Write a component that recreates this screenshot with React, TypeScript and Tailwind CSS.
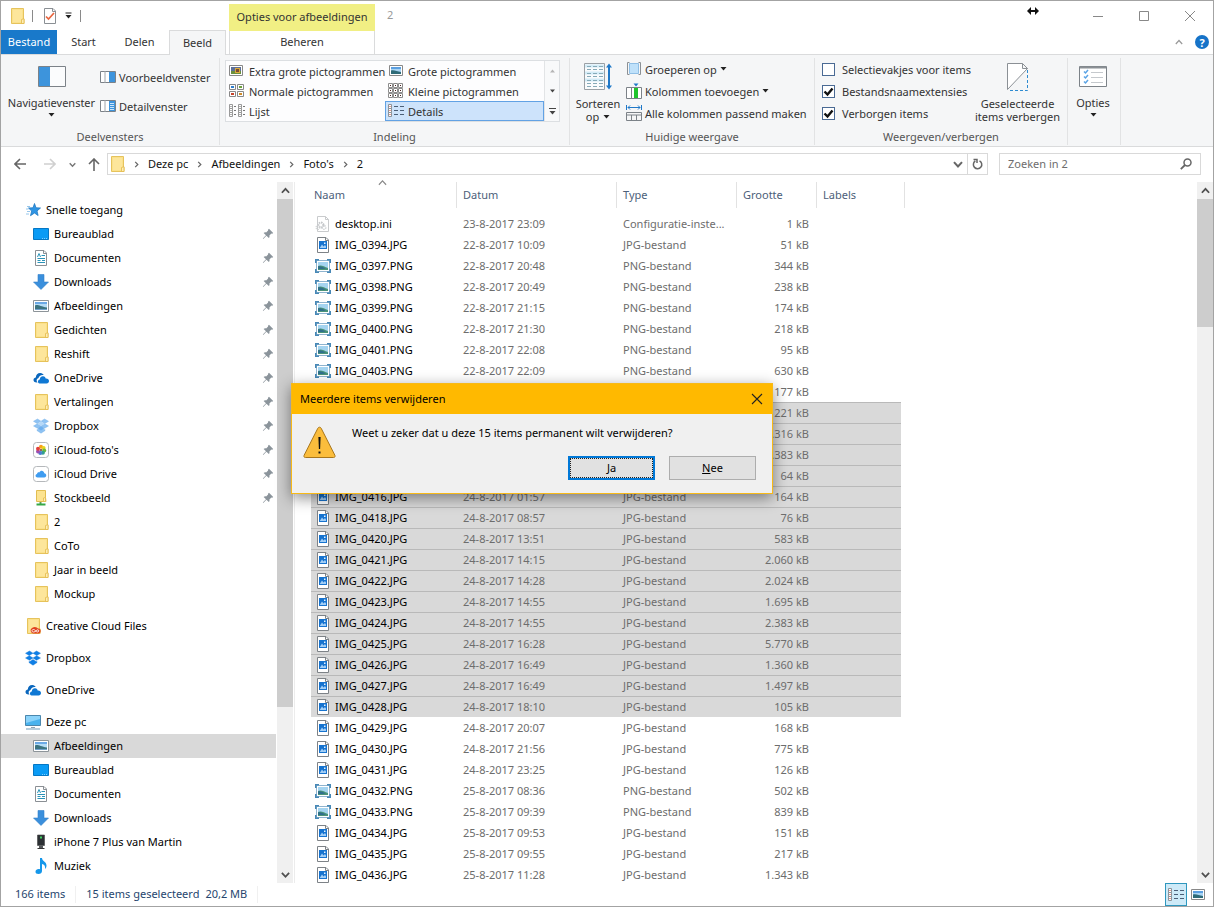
import React from "react";

type P = { children: React.ReactNode; w?: number; h?: number; vb?: string };

function Svg({ children, w = 16, h = 16, vb }: P) {
  return (
    <svg aria-hidden="true" width={w} height={h} viewBox={vb ?? `0 0 ${w} ${h}`} className="shrink-0" fill="none">
      {children}
    </svg>
  );
}

/* ---------- navigation and file icons ---------- */

function FolderShape() {
  return (
    <>
      <path d="M2.500.5h12v10.500l.5.5v4h-12.500z" fill="#fbe18b" stroke="#e6c35c" />
      <path d="M4 2h9v12H4z" fill="#fde69b" />
      <path d="M12.500 15.500v-4l2.500-.8v4.800z" fill="#fdeeb5" stroke="#e3b94a" strokeWidth=".8" />
    </>
  );
}

const Folder = () => (
  <Svg>
    <FolderShape />
  </Svg>
);

const Star = () => (
  <Svg>
    <path d="M9.500 1.500l1.500 4.300 4.500.2-3.500 2.900 1.100 4.600-3.600-2.500-4 2.700L6.700 9 3.500 6l4.500-.2z" fill="#2f95e4" stroke="#1f78c2" strokeWidth=".8" />
    <path d="M2 4.500h3M1 7h2.500M2 9.500h3M1 12h3" stroke="#7cb8e6" strokeWidth=".8" />
  </Svg>
);

const Desktop = () => (
  <Svg>
    <path d="M.5 2.500h15v11H.5z" fill="#0a9bf5" stroke="#0577c4" />
    <path d="M9 12.500h6" stroke="#7cd0ff" strokeDasharray="1 1" />
  </Svg>
);

const Doc = () => (
  <Svg>
    <path d="M2.500.5h8.500l2.500 2.500v12.500h-11z" fill="#fff" stroke="#8a8f94" />
    <path d="M10.500.5v3h3" stroke="#8a8f94" />
    <path d="M4.500 7l1.500-3.500L7.500 7M8.500 5.500H12M4.500 8.500H12M4.500 10.500h3M9 10.500h3M4.500 12.500H12" stroke="#2b93b8" />
  </Svg>
);

const Download = () => (
  <Svg>
    <path d="M5 .5h6V8h4.500L8 15.500.5 8H5z" fill="#3a8fdc" stroke="#3482cb" strokeWidth=".6" />
  </Svg>
);

const Picture = () => (
  <Svg>
    <path d="M.5 2.500h15v11H.5z" fill="#fff" stroke="#8d9499" />
    <path d="M2 4h12v8H2z" fill="#b5dcf6" />
    <path d="M2 4h12v2H2z" fill="#6ba9e6" />
    <path d="M2 7.500c3-1.500 5 1 12 2V11H2z" fill="#3c7480" />
    <path d="M2 11h12v1H2z" fill="#6f9fca" />
  </Svg>
);

const OneDrive = () => (
  <Svg>
    <path d="M4.500 12.500C1.800 12.800.3 11.500.5 9.800c.1-1.400 1.200-2 2.300-2.200C2.800 4.500 5 2.800 7.500 3c1.600.2 2.600 1 3.200 2.100-3-.5-4.700 1-5.200 3-2 .5-2.500 3-1 4.400z" fill="#0a67bd" />
    <path d="M6.500 13.500c-2-.4-2.200-3.600.3-4.100C7 6.800 9.200 5.700 11 6.500c1 .4 1.500 1.200 1.700 2 2-.2 3.300 1 3.300 2.600 0 1.500-1 2.400-2.400 2.400z" fill="#0f78d4" />
  </Svg>
);

function DropboxIcon({ pale = false }: { pale?: boolean }) {
  return (
    <Svg>
      <g fill={pale ? "#8fc3f3" : "#0f7fe6"} stroke={pale ? "#6aa9e6" : "#0d73d4"} strokeWidth=".4">
        <path d="M4.500 1L8 3.200 4.300 5.600.5 3.300z" />
        <path d="M11.500 1L8 3.200l3.700 2.400 3.800-2.300z" />
        <path d="M.5 8l3.800-2.300L8 8l-3.500 2.300z" />
        <path d="M15.500 8l-3.800-2.300L8 8l3.500 2.300z" />
        <path d="M4 11.400l.6.300L8 9.500l3.400 2.200.6-.3v1.200L8 15.200l-4-2.600z" />
      </g>
      {pale && <path d="M4.300 5.700L8 8l3.700-2.300L8 3.300z" fill="#b5d8f8" />}
      {pale && <path d="M4.600 10.300L8 8l3.400 2.300L8 12.500z" fill="#6fb0ee" />}
    </Svg>
  );
}

const ICloudPhotos = () => (
  <Svg>
    <rect x=".5" y=".5" width="15" height="15" rx="3" fill="#fff" stroke="#b5b8bb" />
    <circle cx="8" cy="4.800" r="2" fill="#f7a11a" />
    <circle cx="10.600" cy="6" r="2" fill="#e8d21c" />
    <circle cx="11.200" cy="8.500" r="2" fill="#6cb83c" />
    <circle cx="9.900" cy="10.700" r="2" fill="#35a08d" />
    <circle cx="7.300" cy="11" r="2" fill="#4a7fd0" />
    <circle cx="5" cy="9.500" r="2" fill="#9a4fb4" />
    <circle cx="5" cy="6.700" r="2" fill="#e2403c" />
    <circle cx="8" cy="8" r="1" fill="#7a3020" />
  </Svg>
);

const ICloudDrive = () => (
  <Svg>
    <rect x=".5" y=".5" width="15" height="15" rx="3" fill="#fff" stroke="#b5b8bb" />
    <path d="M4.500 11.500c-2.300 0-2.600-3-.5-3.500C4.200 6.200 5.800 6 6.300 6.500 7.500 3.800 11 4.500 11.300 7.300c2.600.2 2.700 4.200 0 4.200z" fill="#3f9cf0" />
  </Svg>
);

const NetFolder = () => (
  <Svg>
    <path d="M3.500.5h9v7l.5 4H3.500z" fill="#fce390" stroke="#e2bd50" />
    <path d="M10.500 11.500v-3.500l2-.5v4z" fill="#fff0b8" stroke="#e3b94a" strokeWidth=".8" />
    <path d="M7.500 12v2.500" stroke="#5b9e54" strokeWidth="2" />
    <path d="M3.500 14.500h9" stroke="#35a845" strokeWidth="2" />
  </Svg>
);

const CreativeCloud = () => (
  <Svg>
    <FolderShape />
    <path d="M8 15.500a3 3 0 0 1-1-5.500c2.500-2 5-1 6 .500 2.500 0 3 2 2.500 3.500-.5 1-1.500 1.500-2.500 1.500z" fill="#e0431f" />
    <path d="M8.500 14c-2 0-2-2.500 0-2.500 1.500 0 2.500 2.500 4 2.500s1.800-2 .2-2.200c-1.200 0-2 2.200-4.200 2.200z" stroke="#fff" strokeWidth=".9" />
  </Svg>
);

const Computer = () => (
  <Svg>
    <path d="M.5 1.500h15v10H.5z" fill="#49b3ee" stroke="#4b87ad" />
    <path d="M1 2h14v3L1 9z" fill="#8bd3fa" />
    <path d="M6 13.500h4" stroke="#8fa3b0" />
    <path d="M1 15h14" stroke="#6f9bb8" />
  </Svg>
);

const Phone = () => (
  <Svg>
    <path d="M4.500 1h7v10.500h-7z" fill="#2c3034" stroke="#444" strokeWidth=".6" />
    <path d="M7 2.500h2v2H7z" fill="#3fcf5f" />
    <path d="M6 11.500h4V14H6z" fill="#55585b" />
    <path d="M4.500 14.500h7" stroke="#333" />
  </Svg>
);

const Music = () => (
  <Svg>
    <path d="M7 0h2c0 3 4.500 3.500 4.500 7.500 0 1.500-.5 2.500-1.500 3.500.6-3-.8-4.600-3-5v7C9 15 7.500 16 5.500 16 3.500 16 2.500 15 2.500 13.700c0-2 2.500-3.200 4.500-2.400z" fill="#1597ea" />
  </Svg>
);

const Ini = () => (
  <Svg>
    <path d="M2.500.5h8l3 3v12h-11z" fill="#fff" stroke="#c9cbcd" />
    <path d="M10.500.5v3h3" stroke="#c9cbcd" />
    <circle cx="6" cy="9" r="2.500" stroke="#c3c6c9" strokeWidth="2" strokeDasharray="1.500 .8" />
    <circle cx="9" cy="11.500" r="1.800" stroke="#d0d3d5" strokeWidth="1.500" strokeDasharray="1.200 .8" />
    <circle cx="3" cy="11.500" r="2" stroke="#d0d3d5" strokeWidth="1.200" strokeDasharray="1.200 .8" />
  </Svg>
);

const Jpg = () => (
  <Svg>
    <path d="M2.500.5h8.500l2.500 2.500v12.500h-11z" fill="#fff" stroke="#7d8287" />
    <path d="M10.500.5v3h3" stroke="#7d8287" />
    <path d="M4 4h8v8H4z" fill="#1673cf" />
    <path d="M5 10.500l2-3 1.500 2 1.500-1.500 1 1.500v1.500H5z" fill="#a4cff6" />
    <path d="M9 5.500h1.500V7H9z" fill="#e6f3fe" />
  </Svg>
);

const Png = () => (
  <Svg>
    <path d="M1.500 2.500h13v11h-13z" fill="#fff" stroke="#8fb4cf" />
    <path d="M3 4h10v8H3z" fill="#a5d4f0" />
    <path d="M3 8c3-1.500 6 .5 10 2v2H3z" fill="#4b9478" />
    <path d="M3 8.500c2-1 5 .5 8 2l-3 .5H3z" fill="#2f6f8c" />
    <path d="M.8 5V1.800H4M12 1.800h3.200V5M.8 11v3.200H4M12 14.200h3.200V11" stroke="#4788b6" strokeWidth="1.600" />
  </Svg>
);

const Pin = () => (
  <Svg w={12} h={12}>
    <path d="M7 .8l4.200 4.200-1 .8-.8-.2-2 2c.3 1 .1 1.800-.5 2.500L4.400 7.700 1.500 10.700l-.6.200.2-.7 2.900-2.900-2.400-2.400c.8-.7 1.600-.8 2.500-.5l2-2-.1-.7z" fill="#8b949b" />
  </Svg>
);

/* ---------- small glyphs ---------- */

const Caret = () => (
  <Svg w={7} h={4}>
    <path d="M.5 0h6L3.500 3.500z" fill="#222" />
  </Svg>
);

function Chevron({ dir, size = 8, color = "#666", sw = 1.6 }: { dir: "up" | "down" | "right"; size?: number; color?: string; sw?: number }) {
  const d = dir === "up" ? "M.8 6l3.200-3.500L7.200 6" : dir === "down" ? "M.8 2.500L4 6l3.200-3.500" : "M2.500 1L5.500 4l-3 3";
  return (
    <Svg w={size} h={size} vb="0 0 8 8">
      <path d={d} stroke={color} strokeWidth={sw} />
    </Svg>
  );
}

/* ---------- ribbon icons ---------- */

const ExtraLarge = () => (
  <Svg>
    <path d="M.5 2.500h13v10h-13z" fill="#fff" stroke="#888" />
    <path d="M2 4h10v7H2z" fill="#5b6f9a" />
    <path d="M2 8h10v3H2z" fill="#6b8f3c" />
    <path d="M6 5h5v5H6z" fill="#d9a93a" />
    <path d="M7 6h3v3H7z" fill="#7a4b32" />
  </Svg>
);

const Large = () => (
  <Svg>
    <path d="M1.500 2.500h13v10h-13z" fill="#fff" stroke="#888" />
    <path d="M3 4h10v7H3z" fill="#a9d4f4" />
    <path d="M3 4h10v2H3z" fill="#5b9fe0" />
    <path d="M3 7.500c3-1 6 1 10 1.500v2H3z" fill="#2f6b78" />
  </Svg>
);

const Medium = () => (
  <Svg>
    <path d="M.5 1.500h6v5h-6zM8.500 1.500h6v5h-6zM.5 8.500h6v5h-6zM8.500 8.500h6v5h-6z" fill="#fff" stroke="#888" />
    <path d="M2 3h3v2H2z" fill="#2f7fd0" />
    <path d="M10 3h3v2h-3z" fill="#6aa23c" />
    <path d="M2 10h3v2H2z" fill="#c8422a" />
    <path d="M10 10h3v2h-3z" fill="#d08a2a" />
  </Svg>
);

const Small = () => (
  <Svg>
    <path d="M.5.500h4v4h-4zM5.500.500h4v4h-4zM10.500.500h4v4h-4zM.5 5.500h4v4h-4zM5.500 5.500h4v4h-4zM10.500 5.500h4v4h-4zM.5 10.500h4v4h-4zM5.500 10.500h4v4h-4zM10.500 10.500h4v4h-4z" fill="#fff" stroke="#8d8d8d" />
    <path d="M2 2h1v1H2zM7 2h1v1H7zM12 2h1v1h-1zM2 7h1v1H2zM7 7h1v1H7zM12 7h1v1h-1zM2 12h1v1H2zM7 12h1v1H7zM12 12h1v1h-1z" fill="#4a2220" />
  </Svg>
);

const ListView = () => (
  <Svg>
    <path d="M.5 1.500h3v4h-3zM.5 5.500h3v4h-3zM.5 9.500h3v4h-3zM9.500 1.500h3v4h-3zM9.500 5.500h3v4h-3zM9.500 9.500h3v4h-3z" fill="#fff" stroke="#999" />
    <path d="M1.500 3.500h1M1.500 7.500h1M1.500 11.500h1M10.500 3.500h1M10.500 7.500h1M10.500 11.500h1" stroke="#666" />
    <path d="M5 3.500h2M5 7.500h2M5 11.500h2M14 3.500h2M14 7.500h2M14 11.500h2" stroke="#777" />
  </Svg>
);

const DetailsView = () => (
  <Svg>
    <path d="M.5 1.500h3v4h-3zM.5 5.500h3v4h-3zM.5 9.500h3v4h-3z" fill="#fff" stroke="#8d9399" />
    <path d="M1.500 3.500h1M1.500 7.500h1M1.500 11.500h1" stroke="#c0392b" />
    <path d="M6 3.500h4M12 3.500h4M6 7.500h4M12 7.500h4M6 11.500h4M12 11.500h4" stroke="#4b5f77" />
  </Svg>
);

const NavPane = () => (
  <Svg w={28} h={22}>
    <path d="M.5.500h27v20H.5z" fill="#fbfcfd" stroke="#7c8288" />
    <path d="M1 1h11v19H1z" fill="#3d94dc" />
  </Svg>
);

function PaneIcon({ lines = false }: { lines?: boolean }) {
  return (
    <Svg>
      <path d="M.5 2.500h15v11H.5z" fill="#fff" stroke="#7c8288" />
      <path d="M5 2v12" stroke="#a0a5aa" />
      <path d="M9 3h6v10H9z" fill="#3d94dc" />
      {lines && <path d="M10 5.500h4M10 7.500h4M10 9.500h4M10 11.500h4" stroke="#cbe5fa" />}
    </Svg>
  );
}

const SortIcon = () => (
  <Svg w={28} h={28}>
    <path d="M.5.500h20v26H.5z" fill="#fafbfc" stroke="#9aa0a5" />
    <path d="M1 1.500h19v3H1zM1 8.500h19v3H1zM1 15.500h19v3H1z" fill="#d4ecf7" />
    <path d="M3 3.500h16M3 6.500h16M3 10.500h16M3 13.500h16M3 17.500h16M3 20.500h16M3 23.500h16" stroke="#86aab8" strokeDasharray="4 2" />
    <path d="M25 3v21" stroke="#1f78c8" strokeWidth="2" />
    <path d="M22 4.500L25 .500l3 4zM22 22.500l3 4 3-4z" fill="#1f78c8" />
  </Svg>
);

const GroupIcon = () => (
  <Svg>
    <path d="M3.500 2.500h9v10h-9z" fill="#bfe1fa" stroke="#8fbfe6" />
    <path d="M3.500 1.500h-2v12h2M12.500 1.500h2v12h-2" stroke="#8b9095" />
  </Svg>
);

const ColumnsIcon = () => (
  <Svg>
    <path d="M.5 4.500h15v11H.5z" fill="#fff" stroke="#7c8288" />
    <path d="M5.500 4v12" stroke="#7c8288" />
    <path d="M8 5h4v10H8z" fill="#1fc42c" />
    <path d="M7.500.500h5L10 3.500z" fill="#1f78c8" />
  </Svg>
);

const FitIcon = () => (
  <Svg>
    <path d="M.5 0v5M15.500 0v5M2 2.500h12M4 .500L2 2.500l2 2M12 .500l2 2-2 2" stroke="#1f78c8" />
    <path d="M.5 7.500h15v8H.5zM0 10h16M5.500 10v6M10.500 10v6" fill="none" stroke="#7c8288" />
  </Svg>
);

const HideIcon = () => (
  <Svg w={22} h={28}>
    <path d="M15.500.500v5h5L.5 26.500V.5z" fill="#fff" stroke="#8b9095" />
    <path d="M15.500.500l5 5" stroke="#8b9095" />
    <path d="M20.500 7v20.500H1" stroke="#2e8bd0" strokeDasharray="3 2" />
  </Svg>
);

const OptionsIcon = () => (
  <Svg w={28} h={22}>
    <path d="M.5.500h27v20H.5z" fill="#fff" stroke="#7c8288" />
    <path d="M1 1.500h26" stroke="#8b9095" strokeWidth="2" />
    <path d="M5 5.500l1.500 1.500L9 4M5 10.500L6.500 12 9 9M5 15.500L6.500 17 9 14" stroke="#5ba4e6" strokeWidth="1.500" />
    <path d="M12 6.500h12M12 11.500h12M12 16.500h12" stroke="#c5c9cd" />
  </Svg>
);

/* ---------- data ---------- */

type NavItem = { label: string; icon: React.ReactNode; root?: boolean; gap?: boolean; pin?: boolean; active?: boolean };

const nav: NavItem[] = [
  { label: "Snelle toegang", icon: <Star />, root: true },
  { label: "Bureaublad", icon: <Desktop />, pin: true },
  { label: "Documenten", icon: <Doc />, pin: true },
  { label: "Downloads", icon: <Download />, pin: true },
  { label: "Afbeeldingen", icon: <Picture />, pin: true },
  { label: "Gedichten", icon: <Folder />, pin: true },
  { label: "Reshift", icon: <Folder />, pin: true },
  { label: "OneDrive", icon: <OneDrive />, pin: true },
  { label: "Vertalingen", icon: <Folder />, pin: true },
  { label: "Dropbox", icon: <DropboxIcon pale />, pin: true },
  { label: "iCloud-foto's", icon: <ICloudPhotos />, pin: true },
  { label: "iCloud Drive", icon: <ICloudDrive />, pin: true },
  { label: "Stockbeeld", icon: <NetFolder />, pin: true },
  { label: "2", icon: <Folder /> },
  { label: "CoTo", icon: <Folder /> },
  { label: "Jaar in beeld", icon: <Folder /> },
  { label: "Mockup", icon: <Folder /> },
  { label: "Creative Cloud Files", icon: <CreativeCloud />, root: true, gap: true },
  { label: "Dropbox", icon: <DropboxIcon />, root: true, gap: true },
  { label: "OneDrive", icon: <OneDrive />, root: true, gap: true },
  { label: "Deze pc", icon: <Computer />, root: true, gap: true },
  { label: "Afbeeldingen", icon: <Picture />, active: true },
  { label: "Bureaublad", icon: <Desktop /> },
  { label: "Documenten", icon: <Doc /> },
  { label: "Downloads", icon: <Download /> },
  { label: "iPhone 7 Plus van Martin", icon: <Phone /> },
  { label: "Muziek", icon: <Music /> },
];

const files: [string, string, string][] = [
  ["desktop.ini", "23-8-2017 23:09", "1"],
  ["IMG_0394.JPG", "22-8-2017 10:09", "51"],
  ["IMG_0397.PNG", "22-8-2017 20:48", "344"],
  ["IMG_0398.PNG", "22-8-2017 20:49", "238"],
  ["IMG_0399.PNG", "22-8-2017 21:15", "174"],
  ["IMG_0400.PNG", "22-8-2017 21:30", "218"],
  ["IMG_0401.PNG", "22-8-2017 22:08", "95"],
  ["IMG_0403.PNG", "22-8-2017 22:09", "630"],
  ["", "", "177"],
  ["", "", "221"],
  ["", "", "1.316"],
  ["", "", "1.383"],
  ["", "", "64"],
  ["IMG_0416.JPG", "24-8-2017 01:57", "164"],
  ["IMG_0418.JPG", "24-8-2017 08:57", "76"],
  ["IMG_0420.JPG", "24-8-2017 13:51", "583"],
  ["IMG_0421.JPG", "24-8-2017 14:15", "2.060"],
  ["IMG_0422.JPG", "24-8-2017 14:28", "2.024"],
  ["IMG_0423.JPG", "24-8-2017 14:55", "1.695"],
  ["IMG_0424.JPG", "24-8-2017 14:55", "2.383"],
  ["IMG_0425.JPG", "24-8-2017 16:28", "5.770"],
  ["IMG_0426.JPG", "24-8-2017 16:49", "1.360"],
  ["IMG_0427.JPG", "24-8-2017 16:49", "1.497"],
  ["IMG_0428.JPG", "24-8-2017 18:10", "105"],
  ["IMG_0429.JPG", "24-8-2017 20:07", "168"],
  ["IMG_0430.JPG", "24-8-2017 21:56", "775"],
  ["IMG_0431.JPG", "24-8-2017 23:25", "126"],
  ["IMG_0432.PNG", "25-8-2017 08:36", "502"],
  ["IMG_0433.PNG", "25-8-2017 09:39", "839"],
  ["IMG_0434.JPG", "25-8-2017 09:53", "151"],
  ["IMG_0435.JPG", "25-8-2017 09:55", "217"],
  ["IMG_0436.JPG", "25-8-2017 11:28", "1.343"],
];

const SELECTED_FROM = 9;
const SELECTED_TO = 23;

function fileType(name: string) {
  if (name.endsWith(".ini")) return { label: "Configuratie-inste...", icon: <Ini /> };
  if (name.endsWith(".PNG")) return { label: "PNG-bestand", icon: <Png /> };
  if (name.endsWith(".JPG")) return { label: "JPG-bestand", icon: <Jpg /> };
  return { label: "", icon: null };
}

/* ---------- sections ---------- */

function TitleArea() {
  return (
    <header className="flex text-[11px] text-[#333]">
      <div className="flex flex-col">
        <div className="flex h-[29px] items-center pl-2">
          <Folder />
          <span className="ml-[7px] h-3 w-px bg-[#8a8a8a]" />
          <button aria-label="Eigenschappen" className="ml-[9px]">
            <Svg>
              <path d="M2.500.5h8.500l2.500 2.500v12.500h-11z" fill="#fff" stroke="#8a8f94" />
              <path d="M10.500.5v3h3" stroke="#8a8f94" />
              <path d="M4 8.500l2.500 2.500L12 5" stroke="#e8653f" strokeWidth="1.700" />
            </Svg>
          </button>
          <button aria-label="Werkbalk aanpassen" className="ml-[7px]">
            <Svg w={8} h={7}>
              <path d="M.5 1h6" stroke="#222" />
              <path d="M.5 3h6l-3 3.500z" fill="#222" />
            </Svg>
          </button>
          <span className="ml-[7px] h-3 w-px bg-[#8a8a8a]" />
        </div>
        <nav className="flex h-6">
          <button className="w-14 bg-[#1979ca] text-white">Bestand</button>
          <button className="w-[53px]">Start</button>
          <button className="w-[59px]">Delen</button>
          <button className="relative -mb-px w-[57px] border border-b-0 border-[#dadbdc] bg-[#f5f6f7]">Beeld</button>
        </nav>
      </div>
      <div className="ml-[3px] flex w-[146px] flex-col pt-[3px]">
        <div className="flex h-[27px] items-center justify-center bg-[#f1ef84] whitespace-nowrap">Opties voor afbeeldingen</div>
        <button className="h-[17px] flex-1 border-x border-[#dadbdc]">Beheren</button>
      </div>
      <div className="flex flex-1 flex-col">
        <div className="flex h-[29px] items-center">
          <span className="ml-3 flex-1 text-[#999]">2</span>
          <button aria-label="Minimaliseren" className="flex w-[46px] justify-center">
            <Svg w={10} h={10}><path d="M0 5.500h10" stroke="#888" /></Svg>
          </button>
          <button aria-label="Maximaliseren" className="flex w-[46px] justify-center">
            <Svg w={10} h={10}><path d="M.5.500h9v9h-9z" stroke="#888" /></Svg>
          </button>
          <button aria-label="Sluiten" className="flex w-[46px] justify-center">
            <Svg w={10} h={10}><path d="M0 0l10 10M10 0L0 10" stroke="#888" /></Svg>
          </button>
        </div>
        <div className="flex h-6 items-center justify-end gap-3 pr-1">
          <button aria-label="Lint samenvouwen"><Chevron dir="up" color="#999" sw={1.2} /></button>
          <button aria-label="Help" className="flex h-3.5 w-3.5 items-center justify-center rounded-full bg-[#1673c8] text-[11px] leading-none font-bold text-white">?</button>
        </div>
      </div>
    </header>
  );
}

function Group({ label, className, children }: { label: string; className: string; children: React.ReactNode }) {
  return (
    <section className={`flex shrink-0 flex-col border-r border-[#e2e3e4] ${className}`}>
      <div className="flex h-[70px] items-start">{children}</div>
      <div className="flex flex-1 items-center justify-center text-[#555]">{label}</div>
    </section>
  );
}

function GalleryItem({ icon, label, active = false }: { icon: React.ReactNode; label: string; active?: boolean }) {
  return (
    <button className={`flex h-5 items-center gap-1 border pl-0.5 text-left whitespace-nowrap ${active ? "border-[#62a2e4] bg-[#cde3fb]" : "border-transparent"}`}>
      {icon}
      {label}
    </button>
  );
}

function Check({ label, checked = false }: { label: string; checked?: boolean }) {
  return (
    <label className="flex h-[22px] items-center gap-[7px] whitespace-nowrap">
      <span className="grid">
        <input type="checkbox" defaultChecked={checked} className="peer col-start-1 row-start-1 h-[13px] w-[13px] appearance-none border border-[#4a6a94] bg-white" />
        <svg aria-hidden="true" width="13" height="13" viewBox="0 0 13 13" fill="none" className="pointer-events-none invisible col-start-1 row-start-1 peer-checked:visible">
          <path d="M2.500 6.500l3 3 5-6" stroke="#111" strokeWidth="2.400" />
        </svg>
      </span>
      {label}
    </label>
  );
}

function Ribbon() {
  return (
    <div className="flex h-[93px] border-y border-[#dadbdc] bg-[#f5f6f7] pt-[3px] pb-px text-[11px] leading-[13px] text-[#333]">
      <Group label="Deelvensters" className="w-[219px]">
        <button className="flex w-[101px] flex-col items-center pt-2">
          <NavPane />
          <span className="mt-2 mb-1 whitespace-nowrap">Navigatievenster</span>
          <Caret />
        </button>
        <div className="-ml-0.5 flex flex-col gap-[13px] pt-[11px]">
          <button className="flex items-center gap-[3px]"><PaneIcon />Voorbeeldvenster</button>
          <button className="flex items-center gap-[3px]"><PaneIcon lines />Detailvenster</button>
        </div>
      </Group>
      <Group label="Indeling" className="w-[350px]">
        <div className="mt-0.5 ml-[5px] flex h-[62px] border border-[#dcdfe2] bg-[#fdfdfe]">
          <div className="grid grid-cols-[159px_159px] grid-rows-3">
            <GalleryItem icon={<ExtraLarge />} label="Extra grote pictogrammen" />
            <GalleryItem icon={<Large />} label="Grote pictogrammen" />
            <GalleryItem icon={<Medium />} label="Normale pictogrammen" />
            <GalleryItem icon={<Small />} label="Kleine pictogrammen" />
            <GalleryItem icon={<ListView />} label="Lijst" />
            <GalleryItem icon={<DetailsView />} label="Details" active />
          </div>
          <div className="flex w-[15px] flex-col border-l border-[#e2e4e6] bg-[#f8f9fa]">
            <button aria-label="Omhoog" className="flex h-5 items-center justify-center"><Svg w={7} h={4}><path d="M1 3.500h5L3.500.500z" fill="#b5b5b5" /></Svg></button>
            <button aria-label="Omlaag" className="flex h-5 items-center justify-center"><Svg w={7} h={4}><path d="M1 .500h5L3.500 3.500z" fill="#444" /></Svg></button>
            <button aria-label="Meer" className="flex h-5 items-center justify-center"><Svg w={7} h={7}><path d="M0 .5h7" stroke="#444" /><path d="M.5 3h6L3.500 6.500z" fill="#444" /></Svg></button>
          </div>
        </div>
      </Group>
      <Group label="Huidige weergave" className="w-[245px]">
        <button className="flex w-14 flex-col items-center pt-[5px]">
          <SortIcon />
          <span className="mt-1.5">Sorteren</span>
          <span className="flex items-center gap-1">op <Caret /></span>
        </button>
        <div className="flex flex-col">
          <button className="flex h-[22px] items-center gap-[3px]"><GroupIcon />Groeperen op<Caret /></button>
          <button className="flex h-[22px] items-center gap-[3px]"><ColumnsIcon />Kolommen toevoegen<Caret /></button>
          <button className="flex h-[22px] items-center gap-[3px] whitespace-nowrap"><FitIcon />Alle kolommen passend maken</button>
        </div>
      </Group>
      <Group label="Weergeven/verbergen" className="w-[253px]">
        <div className="flex w-[153px] flex-col pl-[7px]">
          <Check label="Selectievakjes voor items" />
          <Check label="Bestandsnaamextensies" checked />
          <Check label="Verborgen items" checked />
        </div>
        <button className="flex flex-1 flex-col items-center pt-[5px]">
          <HideIcon />
          <span className="mt-1.5">Geselecteerde</span>
          <span className="whitespace-nowrap">items verbergen</span>
        </button>
      </Group>
      <Group label="" className="w-[53px]">
        <button className="flex flex-1 flex-col items-center pt-2 pr-0.5">
          <OptionsIcon />
          <span className="mt-2 mb-1">Opties</span>
          <Caret />
        </button>
      </Group>
    </div>
  );
}

function AddressBar() {
  const crumbs = ["Deze pc", "Afbeeldingen", "Foto's", "2"];
  return (
    <div className="flex h-[35px] items-center pr-3 pb-px pl-[13px] text-[11px] text-[#111]">
      <button aria-label="Terug" className="mr-[18px]">
        <Svg w={12} h={12}><path d="M12 6H1M6 1L1 6l5 5" stroke="#666" strokeWidth="1.600" /></Svg>
      </button>
      <button aria-label="Vooruit" className="mr-[13px]">
        <Svg w={12} h={12}><path d="M0 6h11M6 1l5 5-5 5" stroke="#d0d0d0" strokeWidth="1.600" /></Svg>
      </button>
      <button aria-label="Recente locaties" className="mr-3"><Chevron dir="down" size={7} color="#777" /></button>
      <button aria-label="Omhoog" className="mr-[7px]">
        <Svg w={12} h={13}><path d="M6 13V1M1 6l5-5 5 5" stroke="#666" strokeWidth="1.600" /></Svg>
      </button>
      <div className="flex h-[22px] flex-1 items-center border border-[#d9d9d9] pl-px">
        <Folder />
        {crumbs.map((c) => (
          <React.Fragment key={c}>
            <span className="mx-2"><Chevron dir="right" size={7} sw={1.4} /></span>
            <a href="#" className="whitespace-nowrap">{c}</a>
          </React.Fragment>
        ))}
        <span className="flex-1" />
        <button aria-label="Vorige locaties" className="mr-1"><Chevron dir="down" size={10} /></button>
        <button aria-label="Vernieuwen" className="flex h-full w-5 items-center justify-center border-l border-[#d9d9d9]">
          <Svg w={11} h={12}><path d="M7.500 2.800a4.200 4.200 0 1 1-4.200.2M1.500 1.500h3.500v3.500" stroke="#666" strokeWidth="1.500" /></Svg>
        </button>
      </div>
      <div className="ml-[11px] flex h-[22px] w-[202px] items-center border border-[#d9d9d9] pr-2 pl-2">
        <input aria-label="Zoeken in 2" placeholder="Zoeken in 2" className="w-full min-w-0 flex-1 text-[11px] outline-none placeholder:text-[#6d6d6d]" />
        <Svg w={12} h={12}>
          <circle cx="7.500" cy="4.500" r="3.500" stroke="#666" strokeWidth="1.500" />
          <path d="M5 7L.8 11.200" stroke="#666" strokeWidth="1.800" />
        </Svg>
      </div>
    </div>
  );
}

function ScrollBar({ thumb, className = "" }: { thumb: string; className?: string }) {
  return (
    <div className={`flex w-4 shrink-0 flex-col bg-[#f0f0f0] ${className}`}>
      <button aria-label="Omhoog schuiven" className="flex h-[17px] items-center justify-center"><Chevron dir="up" size={9} color="#505050" /></button>
      <div className="min-h-0 flex-1"><div className={`bg-[#cdcdcd] ${thumb}`} /></div>
      <button aria-label="Omlaag schuiven" className="flex h-[17px] items-center justify-center"><Chevron dir="down" size={9} color="#505050" /></button>
    </div>
  );
}

function Sidebar() {
  return (
    <aside className="w-[275px] shrink-0 pt-4 text-[11px] text-black">
      <ul>
        {nav.map((n, i) => (
          <li key={i} className={n.gap ? "mt-2" : ""}>
            <a href="#" className={`flex h-6 items-center gap-[5px] pr-0.5 ${n.root ? "pl-6" : "pl-8"} ${n.active ? "bg-[#d9d9d9]" : ""}`}>
              {n.icon}
              <span className="flex-1">{n.label}</span>
              {n.pin && <Pin />}
            </a>
          </li>
        ))}
      </ul>
    </aside>
  );
}

function FileTable() {
  const heads = ["Naam", "Datum", "Type", "Grootte", "Labels"];
  return (
    <div className="min-w-0 flex-1 pl-4">
      <table className="w-[594px] table-fixed border-collapse text-[11px] text-[#6d6d6d]">
        <colgroup>
          <col className="w-[146px]" />
          <col className="w-[160px]" />
          <col className="w-[120px]" />
          <col className="w-[80px]" />
          <col className="w-[84px]" />
          <col className="w-[4px]" />
        </colgroup>
        <thead>
          <tr>
            {heads.map((h, i) => (
              <th key={h} colSpan={i === 4 ? 2 : 1} className="h-[31px] p-0 text-left align-top font-normal text-[#4c607a]">
                <div className={`relative flex h-[26px] items-center border-r border-[#e2e2e2] ${i === 0 ? "pl-[3px]" : "pl-1.5"}`}>
                  {h}
                  {i === 0 && <span className="absolute -top-1 left-[67px]"><Chevron dir="up" size={9} color="#888" sw={1} /></span>}
                </div>
              </th>
            ))}
          </tr>
        </thead>
        <tbody>
          {files.map(([name, date, size], i) => {
            const sel = i >= SELECTED_FROM && i <= SELECTED_TO;
            const type = fileType(name);
            return (
              <tr key={i} className="[&>td]:h-[21px] [&>td]:p-0 [&>td]:pt-px">
                {[
                  <div key="n" className="flex items-center gap-1 pl-1 text-black">
                    {type.icon}
                    {name}
                  </div>,
                  date,
                  type.label,
                  `${size} kB`,
                  "",
                ].map((cell, c) => (
                  <td key={c} className={`whitespace-nowrap ${c === 1 || c === 2 ? "pl-1.5!" : ""} ${c === 3 ? "pr-2! text-right" : ""} ${sel ? "bg-[#d9d9d9] shadow-[inset_0_1px_0_#b9b9b9]" : ""}`}>
                    {cell}
                  </td>
                ))}
              </tr>
            );
          })}
        </tbody>
      </table>
    </div>
  );
}

function StatusBar() {
  return (
    <footer className="flex h-[23px] items-center pl-3.5 text-[11px] text-[#26456e]">
      <span className="border-r border-[#f0f0f0] pr-2.5">166 items</span>
      <span className="ml-2.5">15 items geselecteerd</span>
      <span className="ml-1.5 border-r border-[#f0f0f0] pr-2.5">20,2 MB</span>
      <span className="flex-1" />
      <button aria-label="Detailweergave" className="flex h-[23px] w-[22px] items-center justify-center border border-[#2f97be] bg-[#cdeaf8]"><DetailsView /></button>
      <button aria-label="Grote miniaturen" className="mr-[7px] ml-[3px]"><Large /></button>
    </footer>
  );
}

function ConfirmDialog() {
  return (
    <div role="alertdialog" aria-labelledby="dlg-title" aria-describedby="dlg-text" className="absolute top-[382px] left-[290px] flex w-[482px] flex-col border border-[#f7b917] bg-[#f0f0f0] text-[11px] text-black shadow-[0_4px_14px_rgba(0,0,0,0.45)]">
      <div className="flex h-[30px] items-center justify-between bg-[#ffb900] pr-[9px] pl-2">
        <h2 id="dlg-title">Meerdere items verwijderen</h2>
        <button aria-label="Sluiten">
          <Svg w={12} h={12}><path d="M1 1l10 10M11 1L1 11" stroke="#222" strokeWidth="1.100" /></Svg>
        </button>
      </div>
      <div className="flex gap-4 pt-3 pl-[11px]">
        <Svg w={33} h={33}>
          <path d="M16.500 1.200c.8 0 1.300.4 1.700 1.100l13.700 27c.6 1.300 0 2.200-1.400 2.200h-28c-1.400 0-2-.9-1.400-2.200l13.700-27c.4-.7.900-1.100 1.700-1.100z" fill="#fbbd3c" stroke="#a8761c" />
          <path d="M15.400 11h2.200l-.5 12h-1.200z" fill="#111" />
          <path d="M15.500 25.500h2v2h-2z" fill="#111" />
        </Svg>
        <p id="dlg-text" className="leading-[14px]">Weet u zeker dat u deze 15 items permanent wilt verwijderen?</p>
      </div>
      <div className="-mt-[3px] mb-[13px] flex justify-end gap-3.5 pr-4">
        <button className="h-6 w-[87px] border-2 border-[#0078d7] bg-[#e1e1e1] outline-1 -outline-offset-3 outline-dotted outline-[#222]"><u>J</u>a</button>
        <button className="h-6 w-[87px] border border-[#adadad] bg-[#e1e1e1]"><u>N</u>ee</button>
      </div>
    </div>
  );
}

export default function App() {
  return (
    <div className="relative flex h-screen flex-col overflow-hidden border border-[#a3a3a3] bg-white font-['Noto_Sans','Open_Sans',sans-serif]">
      <TitleArea />
      <Ribbon />
      <AddressBar />
      <main className="flex min-h-0 flex-1">
        <Sidebar />
        <ScrollBar thumb="h-[508px]" className="ml-px" />
        <div className="mr-0 ml-px w-px bg-[#ececec]" />
        <FileTable />
        <ScrollBar thumb="h-32" />
      </main>
      <StatusBar />
      <ConfirmDialog />
      <div className="absolute top-[5px] left-[1026px]">
        <Svg w={12} h={10}><path d="M0 5l4-4v3h4V1l4 4-4 4V6H4v3z" fill="#111" /></Svg>
      </div>
    </div>
  );
}
